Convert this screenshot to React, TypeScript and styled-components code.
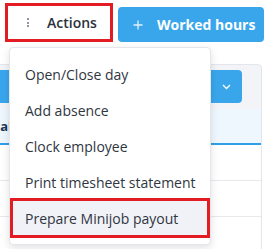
import React from 'react';
import { createGlobalStyle, styled } from 'styled-components';

const GlobalStyle = createGlobalStyle`
  html, body {
    margin: 0;
    padding: 0;
    background: #ffffff;
  }
  body {
    font-family: 'Open Sans', 'Noto Sans', sans-serif;
    color: #2f3641;
    overflow: hidden;
  }
`;

const menuItems = ['Open/Close day', 'Add absence', 'Clock employee', 'Print timesheet statement'];

const App = () => {
  return (
    <Page>
      <GlobalStyle />
      <Toolbar>
        <ActionsBtn>
          <Dots>
            <span />
            <span />
            <span />
          </Dots>
          Actions
        </ActionsBtn>
        <WorkedBtn>
          <svg width='10' height='10' viewBox='0 0 10 10'>
            <path d='M5 0.5v9M0.5 5h9' stroke='#ffffff' strokeWidth='1.3' opacity='0.85' />
          </svg>
          Worked hours
        </WorkedBtn>
      </Toolbar>

      <Card>
        <SplitBar>
          <BarMain />
          <BarToggle>
            <svg width='9' height='6' viewBox='0 0 9 6'>
              <path d='M1 1l3.5 3.5L8 1' stroke='#ffffff' strokeWidth='1.3' fill='none' />
            </svg>
          </BarToggle>
        </SplitBar>
        <HeaderRow>Total:</HeaderRow>
        <Row />
        <Row />
        <Row />
      </Card>

      <Menu>
        {menuItems.map(item => (
          <MenuItem key={item}>{item}</MenuItem>
        ))}
        <MenuItem $marked>Prepare Minijob payout</MenuItem>
      </Menu>
    </Page>
  );
};

const Page = styled.div`
  position: relative;
  width: 271px;
  height: 249px;
  overflow: hidden;
`;

const Toolbar = styled.div`
  display: flex;
  align-items: flex-end;
  gap: 5px;
  padding: 3px 0 0 5px;
`;

const ActionsBtn = styled.div`
  box-sizing: border-box;
  width: 108px;
  height: 39px;
  display: flex;
  align-items: center;
  gap: 18px;
  padding-left: 19px;
  border: 3px solid #e31b23;
  background: #ffffff;
  font-size: 14px;
  font-weight: 600;
  color: #2b323d;
`;

const Dots = styled.div`
  display: flex;
  flex-direction: column;
  gap: 1.5px;
  span {
    width: 2px;
    height: 2px;
    border-radius: 50%;
    background: #6b7280;
  }
`;

const WorkedBtn = styled.div`
  box-sizing: border-box;
  width: 146px;
  height: 35px;
  display: flex;
  align-items: center;
  gap: 14px;
  padding-left: 15px;
  border-radius: 4px;
  background: #39a6ec;
  color: #ffffff;
  font-size: 14px;
  font-weight: 700;
`;

const Card = styled.div`
  box-sizing: border-box;
  width: 302px;
  margin: 22px 0 0 -40px;
  border: 1px solid #e4e6eb;
  border-radius: 4px;
  background: #f3f4f8;
  padding-top: 5px;
`;

const SplitBar = styled.div`
  display: flex;
  height: 33px;
  margin: 0 19px 6px 0;
`;

const BarMain = styled.div`
  flex: 1;
  background: #39a6ec;
  border-radius: 4px 0 0 4px;
  border-right: 1px solid #5bb6f0;
`;

const BarToggle = styled.div`
  width: 32px;
  display: flex;
  align-items: center;
  justify-content: center;
  background: #39a6ec;
  border-radius: 0 4px 4px 0;
`;

const HeaderRow = styled.div`
  box-sizing: border-box;
  height: 36px;
  display: flex;
  align-items: center;
  padding-left: 18px;
  background: #eef6fe;
  border-bottom: 2px solid #2d9ee8;
  font-size: 13px;
  font-weight: 700;
  color: #1d3557;
`;

const Row = styled.div`
  height: 35px;
  background: #ffffff;
  border-bottom: 1px solid #e6e8ec;
`;

const Menu = styled.div`
  position: absolute;
  left: 9px;
  top: 47px;
  box-sizing: border-box;
  width: 202px;
  padding: 8px 0 6px;
  background: #ffffff;
  border: 1px solid #e4e6eb;
  border-radius: 4px;
  box-shadow: 0 3px 8px rgba(0, 0, 0, 0.12);
`;

const MenuItem = styled.div<{ $marked?: boolean }>`
  box-sizing: border-box;
  height: ${({ $marked }) => ($marked ? '40px' : '36px')};
  margin-top: ${({ $marked }) => ($marked ? '-2px' : '0')};
  display: flex;
  align-items: center;
  padding-left: ${({ $marked }) => ($marked ? '12px' : '15px')};
  border: ${({ $marked }) => ($marked ? '3px solid #e31b23' : 'none')};
  background: ${({ $marked }) => ($marked ? '#f1f2f7' : '#ffffff')};
  font-size: 14px;
  color: #2f3641;
  white-space: nowrap;
`;

export default App;
